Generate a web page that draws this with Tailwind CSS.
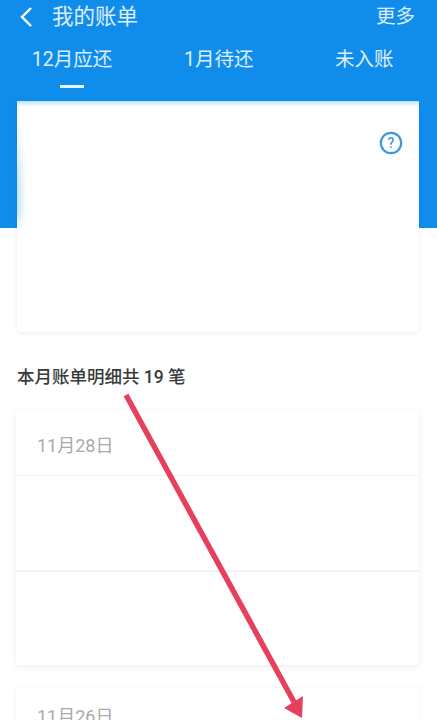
<!doctype html>
<html lang="zh">
<head>
<meta charset="utf-8">
<script src="https://cdn.jsdelivr.net/npm/@tailwindcss/browser@4"></script>
</head>
<body class="m-0">
<div class="relative w-[437px] h-[720px] overflow-hidden bg-white font-['Roboto','Noto_Sans_CJK_SC',sans-serif]">
  <div class="h-[228px] bg-[#108deb]">
    <div class="h-[34px] flex items-center pl-[19px] pr-[22px] text-white">
      <svg class="w-[14px] h-[22px]" viewBox="0 0 14 22" fill="none" stroke="#fff" stroke-width="2.4"><path d="M12 2 L3 11 L12 20"/></svg>
      <span class="ml-[19px] text-[21.5px] leading-none whitespace-nowrap text-white/85">我的账单</span>
      <span class="ml-auto text-[19.5px] leading-none whitespace-nowrap text-white/85">更多</span>
    </div>
    <div class="relative h-[66px] text-[19.5px] leading-none whitespace-nowrap text-white/85">
      <div class="absolute left-[32px] top-[16px] flex flex-col items-center w-[80px]"><span>12月应还</span><span class="mt-[15px] w-[24px] h-[3px] bg-white/90"></span></div>
      <span class="absolute left-[184px] top-[16px]">1月待还</span>
      <span class="absolute left-[335px] top-[16px]">未入账</span>
    </div>
  </div>
  <div class="absolute left-[17px] top-[101px] w-[402px] h-[231px] bg-white rounded-b-[4px] shadow-[0_1px_4px_rgba(0,0,0,0.08)]">
    <div class="absolute left-0 top-[20px] w-[9px] h-[107px] bg-gradient-to-r from-[#108deb]/25 to-white/0 [mask-image:linear-gradient(to_bottom,transparent,black_60%,black_85%,transparent)]"></div>
    <div class="absolute left-0 top-0 w-full h-[6px] bg-gradient-to-b from-[#108deb]/25 to-white/0"></div>
    <svg class="absolute left-[362px] top-[30px] w-[24px] h-[24px]" viewBox="0 0 24 24" fill="none"><circle cx="12" cy="12" r="10.2" stroke="#3f98de" stroke-width="2.2"/><text x="12" y="17" font-size="14" font-weight="500" text-anchor="middle" fill="#3f98de" font-family="Roboto">?</text></svg>
  </div>
  <div class="absolute left-[17px] top-[378px] -translate-y-1/2 text-[17.5px] leading-none font-medium whitespace-nowrap text-[#3a3a3a]">本月账单明细共 19 笔</div>
  <div class="absolute left-[16px] top-[410px] w-[403px] h-[255px] bg-white rounded-[4px] shadow-[0_2px_6px_rgba(0,0,0,0.07)] flex flex-col">
    <div class="h-[66px] border-b border-[#f3f3f3] pl-[21px] pt-[27px] text-[18px] leading-none whitespace-nowrap text-[#aaa]">11月28日</div>
    <div class="h-[96px] border-b-2 border-[#f3f3f3]"></div>
  </div>
  <div class="absolute left-[16px] top-[688px] w-[403px] h-[60px] bg-white shadow-[0_0_6px_rgba(0,0,0,0.06)] pl-[21px] pt-[20px] text-[18px] leading-none whitespace-nowrap text-[#aaa]">11月26日</div>
  <svg class="absolute left-0 top-0 w-[437px] h-[720px] pointer-events-none" viewBox="0 0 437 720" fill="none"><path d="M126 395 L294 702" stroke="#e5415f" stroke-width="5.5"/><path d="M303 696 L302 718 L284 708 Z" fill="#e5415f"/></svg>
</div>
</body>
</html>
